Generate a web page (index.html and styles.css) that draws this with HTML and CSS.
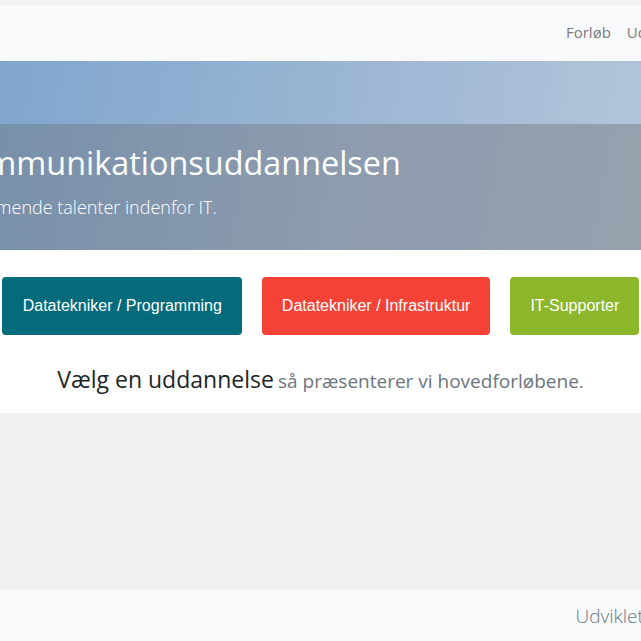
FILE: index.html
```html
<!DOCTYPE html>
<html lang="da">
<head>
<meta charset="utf-8">
<title>Data- og kommunikationsuddannelsen</title>
<link rel="stylesheet" href="styles.css">
</head>
<body>
<div class="top-gap"></div>
<nav class="navbar">
  <div class="wide nav-inner">
    <a class="brand" href="#">Data &amp; Kommunikation</a>
    <ul class="nav-links">
      <li><a href="#">Forløb</a></li>
      <li><a href="#">Uddannelser</a></li>
      <li><a href="#">Praktik</a></li>
      <li><a href="#">Kontakt</a></li>
    </ul>
  </div>
</nav>
<header class="hero">
  <div class="hero-sky"></div>
  <div class="hero-overlay">
    <div class="wide hero-inner">
      <h1 class="hero-title">Data- og kommunikationsuddannelsen</h1>
      <p class="hero-sub">Her uddanner vi kommende talenter indenfor IT.</p>
    </div>
  </div>
</header>
<section class="choose">
  <div class="btn-row">
    <a class="btn btn-teal" href="#">Datatekniker / Programming</a>
    <a class="btn btn-red" href="#">Datatekniker / Infrastruktur</a>
    <a class="btn btn-green" href="#">IT-Supporter</a>
  </div>
  <p class="lead"><span class="lead-main">Vælg en uddannelse</span> <span class="lead-muted">så præsenterer vi hovedforløbene.</span></p>
</section>
<main class="content"></main>
<footer class="footer">
  <div class="wide footer-inner">
    <span class="footer-text">Udviklet af datateknikerne</span>
  </div>
</footer>
</body>
</html>
```

FILE: styles.css
```css
html, body {
  margin: 0;
  padding: 0;
  overflow: hidden;
}
body {
  background: #f1f1f1;
  font-family: "Open Sans", "Noto Sans", sans-serif;
  width: 641px;
  height: 641px;
}
.top-gap { height: 5px; }

.navbar, .hero-overlay, .footer {
  display: flex;
  justify-content: center;
}
.wide {
  width: 1140px;
  flex-shrink: 0;
  box-sizing: border-box;
}

.navbar {
  background: #f8f9fa;
  height: 56px;
}
.nav-inner {
  display: flex;
  align-items: center;
  padding: 0 31px 3px 15px;
}
.brand {
  color: #333;
  text-decoration: none;
  font-size: 20px;
}
.nav-links {
  list-style: none;
  display: flex;
  margin: 0 0 0 auto;
  padding: 0;
}
.nav-links a {
  display: block;
  padding: 8px 8px;
  color: #7b7b7c;
  text-decoration: none;
  font-size: 15px;
}

.hero {
  height: 189px;
  display: flex;
  flex-direction: column;
  background: linear-gradient(100deg, #7fa6cd 0%, #9ab5d3 50%, #b4c5da 100%);
}
.hero-sky { height: 63px; }
.hero-overlay {
  flex: 1;
  background: linear-gradient(100deg, #7890aa 0%, #8c9bae 50%, #97a1ae 100%);
}
.hero-inner {
  padding: 19px 15px 0 64px;
  color: #fff;
}
.hero-title {
  margin: 0;
  font-size: 32.4px;
  font-weight: 400;
  line-height: 1.2;
}
.hero-sub {
  margin: 13px 0 0 10px;
  font-size: 18px;
  font-weight: 300;
}

.choose {
  background: #fff;
  height: 163px;
  box-sizing: border-box;
  padding-top: 27px;
}
.btn-row {
  display: flex;
  justify-content: center;
  gap: 20px;
}
.btn {
  display: block;
  flex-shrink: 0;
  padding: 20px 20px;
  border-radius: 4px;
  color: #fff;
  font-family: "Liberation Sans", Arial, sans-serif;
  font-size: 16px;
  line-height: 18px;
  text-decoration: none;
}
.btn-teal { background: #036b7c; padding-left: 21px; }
.btn-red { background: #f44336; }
.btn-green { background: #8db72b; }

.lead {
  margin: 28px 0 0;
  text-align: center;
}
.lead-main {
  font-size: 23px;
  color: #212529;
}
.lead-muted {
  font-size: 19px;
  color: #6c757d;
}

.content { height: 177px; }

.footer {
  background: #f8f9fa;
  height: 51px;
  align-items: center;
}
.footer-inner { padding-left: 825px; }
.footer-text {
  font-size: 19px;
  font-weight: 300;
  color: #6b7a80;
}
```
